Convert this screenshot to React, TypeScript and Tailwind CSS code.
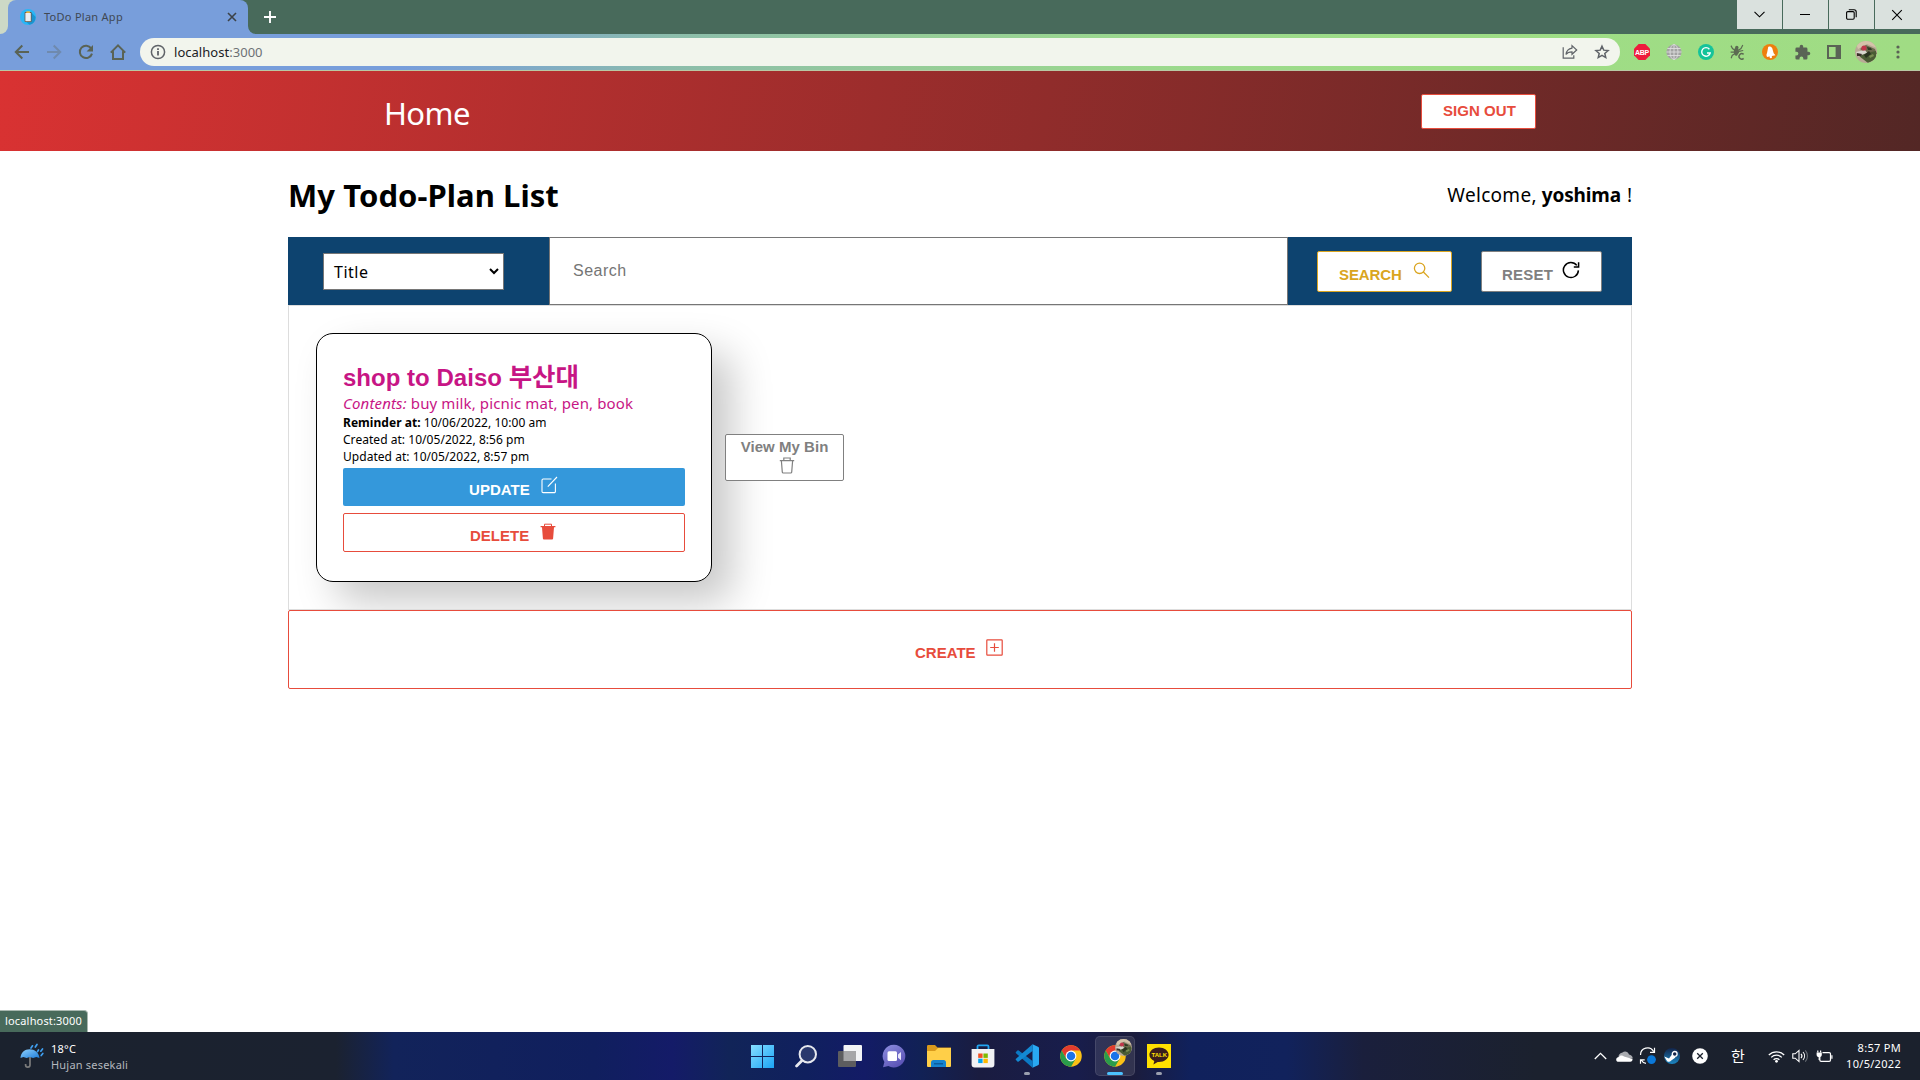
import React from "react";

type IconProps = { className?: string };

/* ---------- browser chrome icons ---------- */

const Favicon = () => (
  <svg width="16" height="16" viewBox="0 0 16 16">
    <circle cx="8" cy="8" r="8" fill="#29b6f6" />
    <path d="M11.5 3.5 15.6 8a8 8 0 0 1-6 7.8L5 12z" fill="#1b93cf" />
    <rect x="4.6" y="3" width="7" height="10" rx="0.8" fill="#6b5a4c" />
    <rect x="5.4" y="4" width="5.4" height="8.2" fill="#e9eef2" />
    <rect x="6.3" y="2.3" width="3.6" height="1.6" fill="#f3b63a" />
  </svg>
);

const Cross = ({ className }: IconProps) => (
  <svg className={className} viewBox="0 0 10 10" fill="none" stroke="currentColor">
    <path d="M1 1l8 8M9 1L1 9" />
  </svg>
);

const BackArrow = ({ className }: IconProps) => (
  <svg className={className} width="16" height="16" viewBox="0 0 16 16" fill="none" stroke="currentColor" strokeWidth="2">
    <path d="M15 8H2.2M8.3 1.5 1.8 8l6.5 6.5" />
  </svg>
);

const Reload = () => (
  <svg width="16" height="16" viewBox="0 0 16 16">
    <path d="M13.2 4.4A6.2 6.2 0 1 0 14 9.6" fill="none" stroke="#5a6355" strokeWidth="2" />
    <path d="M15 1v6.4H8.6z" fill="#5a6355" />
  </svg>
);

const HomeIcon = () => (
  <svg width="18" height="18" viewBox="0 0 18 18" fill="none" stroke="#5a6355" strokeWidth="2">
    <path d="M1.8 9.6 9 2.4l7.2 7.2M4 8.2V16h10V8.2" />
  </svg>
);

const Info = () => (
  <svg width="16" height="16" viewBox="0 0 16 16">
    <circle cx="8" cy="8" r="6.6" fill="none" stroke="#5f6368" strokeWidth="1.5" />
    <path d="M7.1 7h1.8v4.6H7.1zM7.1 4.3h1.8v1.6H7.1z" fill="#5f6368" />
  </svg>
);

const Share = () => (
  <svg width="16" height="16" viewBox="0 0 16 16" fill="none" stroke="#5f6368" strokeWidth="1.2">
    <path d="M1.2 3.2v11h10.6v-3" />
    <path d="M10 1.6 14.7 6 10 10.3V7.9c-2.9 0-4.7.8-6 2.6.4-3.2 2.5-5.9 6-6.4z" />
  </svg>
);

const Star = () => (
  <svg width="16" height="16" viewBox="0 0 16 16" fill="none" stroke="#5f6368" strokeWidth="1.5">
    <path d="M8 2.200l1.750 3.950 4.300.400-3.250 2.850.950 4.200L8 11.400l-3.750 2.200.950-4.200L1.950 6.550l4.300-.400z" />
  </svg>
);

const AdBlock = () => (
  <span className="flex h-4 w-4 items-center justify-center bg-[#ee1c3c] [clip-path:polygon(29%_0,71%_0,100%_29%,100%_71%,71%_100%,29%_100%,0_71%,0_29%)]">
    <span className="font-['Liberation_Sans',sans-serif] text-[7px] leading-none font-bold tracking-[-0.2px] text-white">ABP</span>
  </span>
);

const Globe = () => (
  <svg width="16" height="16" viewBox="0 0 16 16">
    <circle cx="8" cy="8" r="7.6" fill="#a3a3a3" />
    <g fill="none" stroke="#dedede" strokeWidth="0.9">
      <path d="M8 .4v15.2M.4 8h15.2M1.4 4.5h13.2M1.4 11.5h13.2" />
      <ellipse cx="8" cy="8" rx="4" ry="7.5" />
    </g>
  </svg>
);

const Grammar = () => (
  <svg width="16" height="16" viewBox="0 0 16 16">
    <circle cx="8" cy="8" r="8" fill="#15c39a" />
    <path d="M11.4 5.2A4.3 4.3 0 1 0 12.2 9H9" fill="none" stroke="#fff" strokeWidth="1.4" />
  </svg>
);

const Bug = () => (
  <svg width="16" height="16" viewBox="0 0 16 16" fill="none" stroke="#5c6b52" strokeWidth="1.2">
    <ellipse cx="6.4" cy="7.8" rx="2.6" ry="4" fill="#5c6b52" stroke="none" />
    <circle cx="6.8" cy="3.4" r="1.7" fill="#5c6b52" stroke="none" />
    <path d="M4.5 6 2.5 4.5 1 1.6M8.8 6l2.2-1.5L12.8 1M4 8.2H.6M9 7.3l4.2-.8M4.3 10 2.2 11.4 1.2 14.2" />
    <path d="M13.6 10.4a2.7 2.7 0 1 0 0 4" stroke="#a0dc84" strokeWidth="3.4" />
    <path d="M13.6 10.4a2.7 2.7 0 1 0 0 4" strokeWidth="1.5" />
  </svg>
);

const BellBadge = () => (
  <svg width="16" height="16" viewBox="0 0 16 16">
    <circle cx="8" cy="8" r="8" fill="#ee7f0e" />
    <path d="M6.2 3C8.5 1.8 10.3 3.3 10.8 6.2l.9 3 1.7 2-8.4 1.9L4.4 11 5.2 8.2z" fill="#fff" />
    <circle cx="8.8" cy="13" r="1.2" fill="#fff" />
  </svg>
);

const Puzzle = () => (
  <svg width="17" height="17" viewBox="0 0 24 24" fill="#5a6355">
    <path d="M20.5 11H19V7a2 2 0 0 0-2-2h-4V3.5a2.5 2.5 0 0 0-5 0V5H4a2 2 0 0 0-2 2v3.8h1.5a2.7 2.7 0 0 1 0 5.4H2V20a2 2 0 0 0 2 2h3.8v-1.5a2.7 2.7 0 0 1 5.4 0V22H17a2 2 0 0 0 2-2v-4h1.5a2.5 2.5 0 0 0 0-5z" />
  </svg>
);

const SidePanel = () => (
  <svg width="14" height="14" viewBox="0 0 14 14">
    <rect width="14" height="14" fill="#5a6355" />
    <rect x="2" y="2" width="6.6" height="10" fill="#a0dc84" />
  </svg>
);

const Avatar = ({ size }: { size: number }) => (
  <svg width={size} height={size} viewBox="0 0 22 22">
    <defs>
      <clipPath id={`avatar-${size}`}>
        <circle cx="11" cy="11" r="11" />
      </clipPath>
    </defs>
    <g clipPath={`url(#avatar-${size})`}>
      <rect width="22" height="22" fill="#b9aa96" />
      <path d="M0 0h22v7L12 3 3 8z" fill="#d5c3aa" />
      <path d="M5 8l6-4 9 4 2 5-9 1z" fill="#6a6a4c" />
      <path d="M1 11l9-2 3 4-9 3z" fill="#d9d6ce" />
      <path d="M4 15l8-3 9-2v8l-8 4z" fill="#4a5c34" />
      <circle cx="9" cy="7" r="2.6" fill="#c0354a" />
      <path d="M9 14l5-4 2 3-5 4z" fill="#2b3320" />
      <path d="M2 12l5 1-1 2-4 0z" fill="#3a302a" />
      <path d="M12 6l4 1 1 2-4 0z" fill="#2f3a24" />
      <path d="M14 15l4-2 1 2-4 2z" fill="#7a8c52" />
    </g>
  </svg>
);

const Kebab = () => (
  <svg width="4" height="14" viewBox="0 0 4 14" fill="#5a6355">
    <circle cx="2" cy="2" r="1.6" />
    <circle cx="2" cy="7" r="1.6" />
    <circle cx="2" cy="12" r="1.6" />
  </svg>
);

/* ---------- page icons ---------- */

const Magnifier = () => (
  <svg width="17" height="17" viewBox="0 0 17 17" fill="none" stroke="#daa520" strokeWidth="1.3">
    <circle cx="6.6" cy="6.3" r="5.2" />
    <path d="M10.4 10l5.6 5.6" />
  </svg>
);

const ResetIcon = () => (
  <svg width="18" height="18" viewBox="0 0 18 18" fill="none" stroke="#000" strokeWidth="1.5">
    <path d="M16.4 9.4A7.5 7.5 0 1 1 14.8 4.4" />
    <path d="M16.6 1.2V6h-4.8" />
  </svg>
);

const EditIcon = () => (
  <svg width="17" height="18" viewBox="0 0 17 18" fill="none" stroke="#fff" strokeWidth="1.1">
    <path d="M10.5 3H2.2A1.2 1.2 0 0 0 1 4.2v11.2a1.2 1.2 0 0 0 1.2 1.2h11a1.2 1.2 0 0 0 1.2-1.2V7.5" />
    <path d="M6.8 10.6 16 1" />
  </svg>
);

const TrashSolid = () => (
  <svg width="16" height="17" viewBox="0 0 16 17">
    <path d="M4.5 3V1.2h7V3" fill="none" stroke="#e74c3c" strokeWidth="1" />
    <path d="M.6 3h14.8v1.3H14l-.9 11.2a1 1 0 0 1-1 .9H3.9a1 1 0 0 1-1-.9L2 4.3H.6z" fill="#e74c3c" />
  </svg>
);

const TrashOutline = () => (
  <svg width="16" height="17" viewBox="0 0 16 17" fill="none" stroke="#808080" strokeWidth="1.2">
    <path d="M4.8 3.4V1h6.4v2.4M.8 3.7h14.4M2.4 4l.9 11.1a1 1 0 0 0 1 .9h7.4a1 1 0 0 0 1-.9L13.6 4" />
  </svg>
);

const PlusSquare = () => (
  <svg width="17" height="17" viewBox="0 0 17 17" fill="none" stroke="#e74c3c" strokeWidth="1.2">
    <rect x="0.8" y="0.8" width="15.4" height="15.4" rx="0.6" />
    <path d="M8.5 4.2v8.6M4.2 8.5h8.6" />
  </svg>
);

/* ---------- taskbar icons ---------- */

const Umbrella = () => (
  <svg width="24" height="26" viewBox="0 0 24 26">
    <defs>
      <linearGradient id="umb" x1="0" y1="0" x2="1" y2="1">
        <stop offset="0" stopColor="#8fd0fb" />
        <stop offset="1" stopColor="#1f7fdc" />
      </linearGradient>
    </defs>
    <path d="M10 13v9a2.2 2.2 0 0 1-4.4 0v-1" fill="none" stroke="#7b7b7b" strokeWidth="1.7" />
    <path d="M0.5 15C.8 9.5 4.8 6.2 9.6 6.2S18.8 9.5 19.5 15l-3.2-1-3.2 1-3.3-1-3.2 1-3.2-1z" fill="url(#umb)" />
    <path d="M12.5 2.8 11 5M17 1.5 15.3 4M22.5 6l-1.7 2.2M18.5 7l-1 1.6M22.8 10.5l-1.6 2" stroke="#3f9ff0" strokeWidth="1.7" strokeLinecap="round" />
  </svg>
);

const WindowsLogo = () => (
  <svg width="23" height="23" viewBox="0 0 23 23">
    <defs>
      <linearGradient id="win" x1="0" y1="0" x2="1" y2="1">
        <stop offset="0" stopColor="#86dfff" />
        <stop offset="1" stopColor="#1ba4f5" />
      </linearGradient>
    </defs>
    <path d="M0 0h11v11H0zM12 0h11v11H12zM0 12h11v11H0zM12 12h11v11H12z" fill="url(#win)" />
  </svg>
);

const TaskSearch = () => (
  <svg width="22" height="23" viewBox="0 0 22 23" fill="none" stroke="#e6e8ee">
    <circle cx="12.8" cy="9.2" r="8.2" strokeWidth="2" fill="#3b4a78" fillOpacity="0.6" />
    <path d="M6.8 15.8 1.6 21" strokeWidth="2.8" strokeLinecap="round" />
  </svg>
);

const TaskView = () => (
  <svg width="24" height="22" viewBox="0 0 24 22">
    <rect x="5.5" y="0" width="18.5" height="16" rx="1" fill="#f3f4f6" />
    <rect x="0" y="6" width="18" height="16" rx="1" fill="#5d5d5f" />
    <rect x="5.5" y="6" width="12.5" height="10" fill="#a6a6a8" />
  </svg>
);

const Chat = () => (
  <svg width="24" height="24" viewBox="0 0 24 24">
    <defs>
      <linearGradient id="chat" x1="0" y1="0" x2="0.7" y2="1">
        <stop offset="0" stopColor="#8e8fe0" />
        <stop offset="1" stopColor="#5a52b5" />
      </linearGradient>
    </defs>
    <path d="M12 .8a11.3 11.3 0 1 1-5.6 21.1L1 23.2l1.4-5.1A11.3 11.3 0 0 1 12 .8z" fill="url(#chat)" />
    <rect x="5.5" y="7.2" width="9.5" height="9.8" rx="1.5" fill="#fff" />
    <path d="M16 10.5 19 8v8.2l-3-2.5z" fill="#e8e6fa" />
  </svg>
);

const Folder = () => (
  <svg width="24" height="22" viewBox="0 0 24 22">
    <path d="M0 1.2A1.2 1.2 0 0 1 1.2 0H8l2.5 2.5H24V8H0z" fill="#d99a1c" />
    <path d="M0 6h8l3-3h13v18a1 1 0 0 1-1 1H1a1 1 0 0 1-1-1z" fill="#ffcf48" />
    <path d="M4 22v-4.5A2.5 2.5 0 0 1 6.5 15h10a2.5 2.5 0 0 1 2.5 2.5V22z" fill="#1683cf" />
    <path d="M7 18h9v1.5H7z" fill="#0b5c9c" />
  </svg>
);

const Store = () => (
  <svg width="24" height="24" viewBox="0 0 24 24">
    <path d="M6.5 6V2.6A1.3 1.3 0 0 1 7.8 1.3h8.4a1.3 1.3 0 0 1 1.3 1.3V6" fill="none" stroke="#22a5f1" strokeWidth="1.8" />
    <path d="M.6 5h22.8v15.5a3 3 0 0 1-3 3H3.6a3 3 0 0 1-3-3z" fill="#f1f2f4" />
    <path d="M7.2 9.5h4.4v4.4H7.2z" fill="#f25022" />
    <path d="M12.4 9.5h4.4v4.4h-4.4z" fill="#7fba00" />
    <path d="M7.2 14.7h4.4v4.4H7.2z" fill="#00a4ef" />
    <path d="M12.4 14.7h4.4v4.4h-4.4z" fill="#ffb900" />
  </svg>
);

const VSCode = () => (
  <svg width="24" height="24" viewBox="0 0 24 24">
    <path d="M17.5.2 23 2.8a1.5 1.5 0 0 1 1 1.4v15.6a1.5 1.5 0 0 1-1 1.4l-5.5 2.6z" fill="#29a9f2" />
    <path d="M17.5 23.8 1 9.2a.9.9 0 0 1 0-1.3l1.4-1.3a1 1 0 0 1 1.3 0L17.8 17.3z" fill="#0b79c4" />
    <path d="M17.5.2 1 14.8a.9.9 0 0 0 0 1.3l1.4 1.3a1 1 0 0 0 1.3 0L17.8 6.7z" fill="#1389d3" />
  </svg>
);

const ChromeLogo = () => (
  <svg width="22" height="22" viewBox="0 0 48 48">
    <circle cx="24" cy="24" r="23.5" fill="#fbc116" />
    <path d="M3.65 12.25A23.5 23.5 0 0 1 44.35 12.25H24V24L13.8 29.9z" fill="#e33b2e" />
    <path d="M3.65 12.25 13.8 29.9 34.2 29.9 24 47.5A23.5 23.5 0 0 1 3.65 12.25z" fill="#2a9d4b" />
    <circle cx="24" cy="24" r="11.75" fill="#fff" />
    <circle cx="24" cy="24" r="9.3" fill="#1a73e8" />
  </svg>
);

const Kakao = () => (
  <span className="relative flex h-6 w-6 items-center justify-center bg-[#ffe000]">
    <svg className="absolute inset-0" width="24" height="24" viewBox="0 0 24 24">
      <path d="M12 3.6c5.3 0 9.6 3.2 9.6 7.2S17.3 18 12 18l-1.3-.1-4.3 2.7.9-3.7c-3-1.2-4.9-3.5-4.9-6.1 0-4 4.3-7.2 9.6-7.2z" fill="#3a1d1d" />
    </svg>
    <span className="relative -mt-0.5 font-['Liberation_Sans',sans-serif] text-[6px] leading-none font-bold text-[#ffe000]">TALK</span>
  </span>
);

const Cloud = () => (
  <svg width="17" height="11" viewBox="0 0 17 11">
    <path d="M3 8a4.5 4.5 0 0 1 3.5-6.5C8.5-.3 12 .3 13 3.5c2 .3 3.5 1.5 3.8 4z" fill="#a9abb0" />
    <path d="M2.8 10.8C.9 10.8.2 9.6.2 8.4c0-1.6 1.3-2.5 2.8-2.5 1-1.6 3.5-1.9 5-.4l8.5 2.6c.2 1.5-.7 2.7-2.3 2.7z" fill="#fff" />
  </svg>
);

const Sync = () => (
  <svg width="18" height="18" viewBox="0 0 18 18" fill="none" stroke="#fff" strokeWidth="1.2">
    <path d="M1.5 8A7 7 0 0 1 14.6 4.5M15.5.8v4.5H11M1.5 16.8v-4h4.2M2 12.8c1.2 2.2 3 3.3 5 3.6" />
    <circle cx="12.5" cy="12.6" r="4.4" fill="#0b78d8" stroke="none" />
  </svg>
);

const Steam = () => (
  <svg width="16" height="16" viewBox="0 0 16 16">
    <defs>
      <linearGradient id="steam" x1="0" y1="0" x2="0" y2="1">
        <stop offset="0" stopColor="#12244a" />
        <stop offset="1" stopColor="#1b86c2" />
      </linearGradient>
    </defs>
    <circle cx="8" cy="8" r="8" fill="url(#steam)" />
    <path d="M.2 8.5 5 10.4l3-4 3.5 3-4.6 3.4A2.5 2.5 0 0 1 3 13z" fill="#fff" />
    <circle cx="10.7" cy="5.9" r="2.4" fill="#12244a" stroke="#fff" strokeWidth="1.3" />
  </svg>
);

const CircleX = () => (
  <svg width="16" height="16" viewBox="0 0 16 16">
    <circle cx="8" cy="8" r="7.8" fill="#fff" />
    <path d="M5.2 5.2l5.6 5.6M10.8 5.2l-5.6 5.6" stroke="#1b212d" strokeWidth="1.3" />
  </svg>
);

const Wifi = () => (
  <svg width="17" height="13" viewBox="0 0 17 13" fill="none" stroke="#fff" strokeWidth="1.3">
    <path d="M.8 5a10.9 10.9 0 0 1 15.4 0M3.2 7.4a7.5 7.5 0 0 1 10.6 0M5.6 9.8a4.1 4.1 0 0 1 5.8 0" />
    <circle cx="8.5" cy="11.3" r="1.4" fill="#fff" stroke="none" />
  </svg>
);

const Volume = () => (
  <svg width="17" height="14" viewBox="0 0 17 14" fill="none" stroke="#fff" strokeWidth="1.1">
    <path d="M.8 4.8v4.4h2.4L7 12.6V1.4L3.2 4.8z" />
    <path d="M9 4.8a3.3 3.3 0 0 1 0 4.4M11 3a6 6 0 0 1 0 8" />
    <path d="M13.3 1.3a8.6 8.6 0 0 1 0 11.4" stroke="#6b7078" />
  </svg>
);

const Battery = () => (
  <svg width="17" height="13" viewBox="0 0 17 13" fill="none" stroke="#fff" strokeWidth="1.2">
    <path d="M6.5 2.6h6.6a1.4 1.4 0 0 1 1.4 1.4v6a1.4 1.4 0 0 1-1.4 1.4H5.2a1.4 1.4 0 0 1-1.4-1.4V7" />
    <path d="M15.9 5.3v3.4M1.8.4v2M4.6.4v2M3.2 7v3" />
    <path d="M.6 2.6h5.2v1.8a2.6 2.6 0 0 1-5.2 0z" fill="#fff" stroke="none" />
  </svg>
);

/* ---------- layout pieces ---------- */

const Cell = ({ children }: { children: React.ReactNode }) => (
  <div className="flex w-8 items-center justify-center">{children}</div>
);

const WindowButton = ({ children }: { children: React.ReactNode }) => (
  <div className="flex h-[29px] w-[45px] items-center justify-center bg-[#dae1de] pr-px text-black">{children}</div>
);

function TitleBar() {
  return (
    <div className="flex h-[34px] justify-between bg-[#486a5b]">
      <div className="flex">
        <div className="flex bg-[linear-gradient(90deg,#cdd9c6_16px,#486a5b_16px)]">
          <div className="flex w-2 bg-[#789edb]">
            <div className="w-2 rounded-br-lg bg-[#cdd9c6]" />
          </div>
          <div className="flex h-[34px] w-[240px] items-center rounded-t-lg bg-[#789edb] pr-[11px] pl-3">
            <Favicon />
            <span className="ml-2 flex-1 text-[11px] tracking-[0.27px] text-[#3f4853]">ToDo Plan App</span>
            <Cross className="h-[10px] w-[10px] stroke-[1.6] text-[#3c4248]" />
          </div>
        </div>
        <div className="flex w-2 bg-[linear-gradient(0deg,#789edb_50%,#486a5b_50%)]">
          <div className="w-2 rounded-bl-lg bg-[#486a5b]" />
        </div>
        <div className="flex w-7 items-center justify-center text-white">
          <svg width="12" height="12" viewBox="0 0 12 12" stroke="currentColor" strokeWidth="1.9">
            <path d="M6 0v12M0 6h12" />
          </svg>
        </div>
      </div>
      <div className="flex gap-px">
        <WindowButton>
          <svg width="11" height="7" viewBox="0 0 11 7" fill="none" stroke="currentColor" strokeWidth="1.1">
            <path d="M.5.8l5 5 5-5" />
          </svg>
        </WindowButton>
        <WindowButton>
          <div className="h-px w-[10px] bg-black" />
        </WindowButton>
        <WindowButton>
          <svg width="11" height="11" viewBox="0 0 11 11" fill="none" stroke="currentColor" strokeWidth="1.1">
            <rect x="0.6" y="2.6" width="7.6" height="7.6" rx="1.2" />
            <path d="M2.8.8h5.2a2.2 2.2 0 0 1 2.2 2.2v5.2" />
          </svg>
        </WindowButton>
        <WindowButton>
          <Cross className="h-3 w-3 stroke-[0.9]" />
        </WindowButton>
      </div>
    </div>
  );
}

function Toolbar() {
  return (
    <div className="flex h-[37px] items-center border-b border-[#b9c8a4] bg-[linear-gradient(90deg,#789edb_0%,#789edb_21%,#7fa9c9_27%,#8cbdab_35%,#96cd98_48%,#9bd98d_60%,#9edd86_75%,#a0dc84_100%)] pl-[6px] text-[#5a6355]">
      <Cell>
        <BackArrow />
      </Cell>
      <Cell>
        <BackArrow className="rotate-180 text-[#6f8aae]" />
      </Cell>
      <Cell>
        <Reload />
      </Cell>
      <Cell>
        <HomeIcon />
      </Cell>
      <div className="ml-[6px] flex h-7 w-[1480px] items-center rounded-full bg-[#f2f5ed] pl-[10px]">
        <Info />
        <span className="ml-2 flex-1 pt-px text-[13px] tracking-[0.03px] text-[#202124]">
          localhost<span className="text-[#6d7175]">:3000</span>
        </span>
        <Cell>
          <Share />
        </Cell>
        <Cell>
          <Star />
        </Cell>
        <div className="w-[2px]" />
      </div>
      <div className="ml-[6px] flex items-center">
        <Cell><AdBlock /></Cell>
        <Cell><Globe /></Cell>
        <Cell><Grammar /></Cell>
        <Cell><Bug /></Cell>
        <Cell><BellBadge /></Cell>
        <Cell><Puzzle /></Cell>
        <Cell><SidePanel /></Cell>
        <Cell><Avatar size={22} /></Cell>
        <Cell><Kebab /></Cell>
      </div>
    </div>
  );
}

function SiteHeader() {
  return (
    <header className="flex h-20 items-center justify-between bg-[linear-gradient(100deg,#d93232_0%,#532725_100%)] px-[384px]">
      <a className="pt-1 text-[31px] leading-none tracking-[-0.6px] text-white">Home</a>
      <button className="flex h-[35px] w-[115px] items-center rounded-[2px] border border-[#e74c3c] bg-white pt-px pl-[21px] font-['Liberation_Sans',sans-serif] text-[15px] font-bold tracking-[0.05px] text-[#e74c3c]">
        SIGN OUT
      </button>
    </header>
  );
}

function SearchBar() {
  return (
    <div className="flex h-[68px] bg-[#0d436f]">
      <div className="flex w-[261px] items-center pl-[35px]">
        <div className="flex h-[37px] w-[181px] items-center justify-between border border-[#767676] bg-white pr-1 pl-[10px]">
          <span className="pt-0.5 text-[16px] tracking-[0.5px] text-black">Title</span>
          <svg width="10" height="7" viewBox="0 0 10 7" fill="none" stroke="#000" strokeWidth="2">
            <path d="M1 1l4 4 4-4" />
          </svg>
        </div>
      </div>
      <div className="flex w-[739px] items-center border border-[#767676] bg-white pl-[23px] font-['Liberation_Sans',sans-serif] text-[16px] tracking-[0.5px] text-[#757575]">
        Search
      </div>
      <div className="flex items-center gap-[29px] pl-[29px] font-['Liberation_Sans',sans-serif] text-[15px] font-bold">
        <button className="flex h-[41px] w-[135px] items-center rounded-[2px] border border-[#daa520] bg-white pl-[21px] text-[#daa520]">
          <span className="pt-2 tracking-[-0.1px]">SEARCH</span>
          <span className="-mt-[2px] ml-[11px]"><Magnifier /></span>
        </button>
        <button className="flex h-[41px] w-[121px] items-center rounded-[2px] border border-[#808080] bg-white pl-[20px] text-[#808080]">
          <span className="pt-2 tracking-[0.2px]">RESET</span>
          <span className="-mt-[3px] ml-[9px]"><ResetIcon /></span>
        </button>
      </div>
    </div>
  );
}

function TodoCard() {
  return (
    <article className="h-[249px] w-[396px] rounded-[17px] border border-black bg-white px-[26px] pt-[28px] shadow-[20px_20px_40px_rgba(0,0,0,0.22)]">
      <h2 className="h-[31px] font-['Liberation_Sans','Noto_Sans_CJK_KR',sans-serif] text-[24px] leading-8 font-bold tracking-[0.02px] whitespace-nowrap text-[#c71585]">
        shop to Daiso <span className="text-[25.5px] leading-none tracking-normal">부산대</span>
      </h2>
      <p className="h-[21px] text-[15px] leading-[21px] tracking-[0.13px] whitespace-nowrap text-[#c71585]">
        <i className="tracking-[0.15px]">Contents:</i> buy milk, picnic mat, pen, book
      </p>
      <p className="text-[12px] leading-[17px] tracking-[0.04px] text-black">
        <b>Reminder at:</b> 10/06/2022, 10:00 am
      </p>
      <p className="text-[12px] leading-[17px] tracking-[0.04px] text-black">Created at: 10/05/2022, 8:56 pm</p>
      <p className="text-[12px] leading-[17px] tracking-[0.04px] text-black">Updated at: 10/05/2022, 8:57 pm</p>
      <div className="mt-[3px] flex flex-col gap-[7px] font-['Liberation_Sans',sans-serif] text-[15px] font-bold">
        <button className="flex h-[38px] items-center rounded-[2px] bg-[#3498db] pl-[126px] text-white">
          <span className="pt-[6px] tracking-[0.05px]">UPDATE</span>
          <span className="-mt-[5px] ml-[11px]"><EditIcon /></span>
        </button>
        <button className="flex h-[39px] items-center rounded-[2px] border border-[#e74c3c] bg-white pl-[126px] text-[#e74c3c]">
          <span className="pt-[7px]">DELETE</span>
          <span className="-mt-[3px] ml-[11px]"><TrashSolid /></span>
        </button>
      </div>
    </article>
  );
}

function Taskbar() {
  return (
    <footer className="grid h-12 shrink-0 grid-cols-[740px_848px_1fr] bg-[linear-gradient(90deg,#1b222e_0%,#1b2230_17.5%,#12235a_20.5%,#101f5e_31%,#141b68_35%,#112458_38%,#10205e_42%,#131b66_45%,#112155_48%,#1a1c40_51%,#181d4c_56%,#1b1c3c_59%,#10215c_62%,#11225c_67%,#1a1f3c_71%,#1b212e_80%,#1b212d_100%)]">
      <div className="flex items-center pl-5">
        <Umbrella />
        <div className="ml-[7px] pt-px text-[11px] leading-4 tracking-[0.2px] text-[#b4b8be]">
          <div className="text-white">18°C</div>
          <div>Hujan sesekali</div>
        </div>
      </div>
      <div className="grid grid-cols-[repeat(10,44.15px)]">
        <Task><WindowsLogo /></Task>
        <Task><TaskSearch /></Task>
        <Task><TaskView /></Task>
        <Task><Chat /></Task>
        <Task><Folder /></Task>
        <Task><Store /></Task>
        <Task dot><VSCode /></Task>
        <Task><ChromeLogo /></Task>
        <div className="relative mx-[2px] my-1 flex items-center justify-center rounded-[5px] border border-white/10 bg-white/10">
          <ChromeLogo />
          <span className="absolute top-[2px] right-[2px]"><Avatar size={17} /></span>
          <span className="absolute bottom-0 h-[3px] w-4 rounded-full bg-[#4cc2ff]" />
        </div>
        <Task dot><Kakao /></Task>
      </div>
      <div className="flex items-center text-white">
        <Tray>
          <svg width="13" height="8" viewBox="0 0 13 8" fill="none" stroke="currentColor" strokeWidth="1.3">
            <path d="M.8 7l5.7-5.7L12.2 7" />
          </svg>
        </Tray>
        <Tray><Cloud /></Tray>
        <Tray><Sync /></Tray>
        <Tray><Steam /></Tray>
        <div className="w-1" />
        <Tray><CircleX /></Tray>
        <div className="w-3.5" />
        <Tray><span className="-mt-0.5 font-['Noto_Sans_CJK_KR',sans-serif] text-[15px] leading-none">한</span></Tray>
        <div className="w-3.5" />
        <Tray><Wifi /></Tray>
        <Tray><Volume /></Tray>
        <Tray><Battery /></Tray>
        <div className="flex-1 pr-[19px] text-right text-[11px] leading-4 tracking-[0.3px]">
          <div>8:57 PM</div>
          <div>10/5/2022</div>
        </div>
      </div>
    </footer>
  );
}

function Task({ children, dot }: { children: React.ReactNode; dot?: boolean }) {
  return (
    <div className="relative flex items-center justify-center">
      {children}
      {dot && <span className="absolute bottom-[5px] h-[3px] w-[6px] rounded-full bg-[#9a9fae]" />}
    </div>
  );
}

function Tray({ children }: { children: React.ReactNode }) {
  return <div className="flex w-6 items-center justify-center">{children}</div>;
}

export default function App() {
  return (
    <div className="flex h-[1080px] w-[1920px] flex-col overflow-hidden bg-white font-['Noto_Sans','Noto_Sans_CJK_KR',sans-serif]">
      <TitleBar />
      <Toolbar />
      <SiteHeader />
      <main className="relative flex-1">
        <div className="mx-auto w-[1344px]">
          <div className="flex h-[86px] items-center justify-between pt-[3px] text-black">
            <h1 className="text-[31px] font-bold tracking-[0.06px]">My Todo-Plan List</h1>
            <p className="text-[19px]">
              <span className="tracking-[0.3px]">Welcome,</span> <b className="tracking-[-0.15px]">yoshima</b>
              <span className="ml-px"> !</span>
            </p>
          </div>
          <SearchBar />
          <section className="flex h-[305px] items-center overflow-hidden border border-[#dddddd] pl-[27px]">
            <TodoCard />
            <button className="relative ml-[13px] flex h-[47px] w-[119px] flex-col items-center rounded-[2px] border border-[#808080] bg-white pt-[2px] font-['Liberation_Sans',sans-serif] text-[15px] leading-[19px] font-bold tracking-[0.04px] text-[#808080]">
              View My Bin
              <span className="mt-px ml-1"><TrashOutline /></span>
            </button>
          </section>
          <button className="flex h-[79px] w-full items-center rounded-[2px] border border-[#e74c3c] bg-white pl-[626px] font-['Liberation_Sans',sans-serif] text-[15px] font-bold text-[#e74c3c]">
            <span className="pt-2">CREATE</span>
            <span className="-mt-[5px] ml-[10px]"><PlusSquare /></span>
          </button>
        </div>
        <div className="absolute bottom-0 left-0 flex h-[22px] w-[88px] items-center rounded-tr-[4px] border-t border-r border-[#a9b8b0] bg-[#486a5b] pl-[5px] text-[11px] tracking-[0.17px] text-white">
          localhost:3000
        </div>
      </main>
      <Taskbar />
    </div>
  );
}
